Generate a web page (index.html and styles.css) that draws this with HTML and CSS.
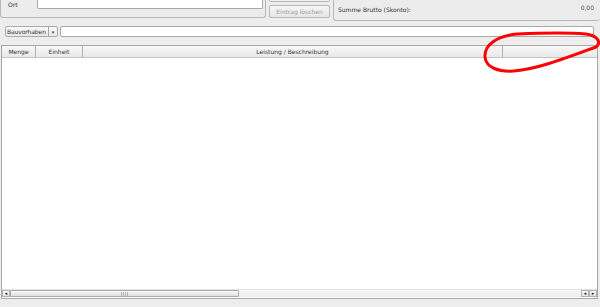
FILE: index.html
```html
<!DOCTYPE html>
<html>
<head>
    <title>Rechnung</title>
    <link rel="stylesheet" href="styles.css">
</head>
<body>
    <div class="window">
        <div class="top">
            <div class="group group-left">
                <span class="label">Ort</span>
                <div class="field field-ort"></div>
            </div>
            <div class="buttons">
                <div class="btn btn-cut"></div>
                <div class="btn disabled">Eintrag löschen</div>
            </div>
            <div class="group group-right">
                <span>Summe Brutto (Skonto):</span>
                <span class="sum">0,00</span>
            </div>
        </div>

        <div class="row">
            <div class="combo">
                <span class="combo-text">Bauvorhaben</span>
                <span class="combo-arrow">&#9662;</span>
            </div>
            <div class="field field-wide"></div>
        </div>

        <div class="table">
            <div class="thead">
                <div class="th col-menge">Menge</div>
                <div class="th col-einheit">Einheit</div>
                <div class="th col-leistung">Leistung / Beschreibung</div>
                <div class="th col-last"></div>
            </div>
            <div class="tbody"></div>
            <div class="hscroll">
                <div class="sbtn">&#9666;</div>
                <div class="track">
                    <div class="slider"><span class="grip"></span></div>
                </div>
                <div class="sbtn">&#9666;</div>
                <div class="sbtn">&#9656;</div>
            </div>
        </div>

        <svg class="mark" width="600" height="307" viewBox="0 0 600 307">
            <path d="M517 34 C497 36 484 45 485 57 C486 68 499 72 514 71 C538 69 566 58 596 47 C601 43 599 36 586 34 C562 32 540 33 517 34 Z"
                  fill="none" stroke="#f00" stroke-width="3" stroke-linecap="round"/>
        </svg>
    </div>
</body>
</html>
```

FILE: styles.css
```css
body {
    margin: 0;
    background: #ededed;
    font-family: "DejaVu Sans", sans-serif;
    font-size: 6px;
    color: #333;
}

.window {
    position: relative;
    width: 600px;
    height: 307px;
    overflow: hidden;
}

.top {
    display: flex;
    height: 21px;
}

.group {
    border: 1px solid #b9b9b9;
    border-top: none;
    border-radius: 0 0 3px 3px;
    background: #ececec;
}

.group-left {
    width: 264px;
    height: 17px;
    display: flex;
    align-items: flex-start;
}

.label {
    width: 29px;
    padding-left: 7px;
    padding-top: 1px;
}

.field {
    background: #fff;
    border: 1px solid #a9a9a9;
    border-radius: 2px;
    box-sizing: border-box;
}

.field-ort {
    width: 226px;
    height: 9px;
    border-top: none;
    border-radius: 0 0 2px 2px;
}

.buttons {
    width: 61px;
    margin-left: 3px;
    display: flex;
    flex-direction: column;
    gap: 3px;
}

.btn {
    box-sizing: border-box;
    height: 13px;
    border: 1px solid #b9b9b9;
    border-radius: 2px;
    background: linear-gradient(#f7f7f7, #e6e6e6);
    display: flex;
    align-items: center;
    justify-content: center;
}

.btn-cut {
    height: 2px;
    border-top: none;
    border-radius: 0 0 2px 2px;
}

.btn.disabled {
    color: #9a9a9a;
}

.group-right {
    flex: 1;
    margin-left: 3px;
    height: 19px;
    border-right: none;
    display: flex;
    justify-content: space-between;
    align-items: center;
    padding: 0 6px 1px 4px;
}

.sum {
    margin-top: -4px;
    color: #555;
}

.row {
    display: flex;
    align-items: center;
    margin-top: 5px;
    margin-left: 5px;
    height: 11px;
}

.combo {
    box-sizing: border-box;
    width: 53px;
    height: 11px;
    display: flex;
    border: 1px solid #aaa;
    border-radius: 2px;
    background: linear-gradient(#fafafa, #e8e8e8);
}

.combo-text {
    flex: 1;
    display: flex;
    align-items: center;
    padding-left: 1px;
    letter-spacing: -0.1px;
    white-space: nowrap;
    overflow: hidden;
}

.combo-arrow {
    width: 8px;
    border-left: 1px solid #aaa;
    display: flex;
    align-items: center;
    justify-content: center;
    font-size: 5px;
    color: #444;
}

.field-wide {
    width: 534px;
    height: 11px;
    margin-left: 2px;
}

.table {
    margin: 8px 2px 0 1px;
    height: 254px;
    box-sizing: border-box;
    border: 1px solid #a7a7a7;
    background: #fff;
    display: flex;
    flex-direction: column;
}

.thead {
    display: flex;
    height: 11px;
    border-bottom: 1px solid #c4c4c4;
    background: linear-gradient(#f8f8f8, #e9e9e9);
}

.th {
    box-sizing: border-box;
    display: flex;
    align-items: center;
    justify-content: center;
    border-right: 1px solid #b0b0b0;
}

.col-menge {
    width: 34px;
}

.col-einheit {
    width: 47px;
}

.col-leistung {
    width: 420px;
}

.col-last {
    flex: 1;
    border-right: none;
}

.tbody {
    flex: 1;
}

.hscroll {
    display: flex;
    height: 7px;
    margin-bottom: 1px;
    background: linear-gradient(#f7f7f7, #ececec);
    border-top: 1px solid #e2e2e2;
}

.sbtn {
    box-sizing: border-box;
    width: 8px;
    border: 1px solid #b0b0b0;
    background: linear-gradient(#fbfbfb, #e4e4e4);
    font-size: 5px;
    line-height: 5px;
    text-align: center;
    color: #222;
}

.track {
    flex: 1;
    display: flex;
}

.slider {
    box-sizing: border-box;
    width: 229px;
    border: 1px solid #a9a9a9;
    border-radius: 1px;
    background: linear-gradient(#fafafa, #dedede);
    display: flex;
    align-items: center;
    justify-content: center;
}

.grip {
    width: 8px;
    height: 4px;
    background: repeating-linear-gradient(90deg, #b5b5b5 0 1px, transparent 1px 2px);
}

.mark {
    position: absolute;
    left: 0;
    top: 0;
    pointer-events: none;
}
```
